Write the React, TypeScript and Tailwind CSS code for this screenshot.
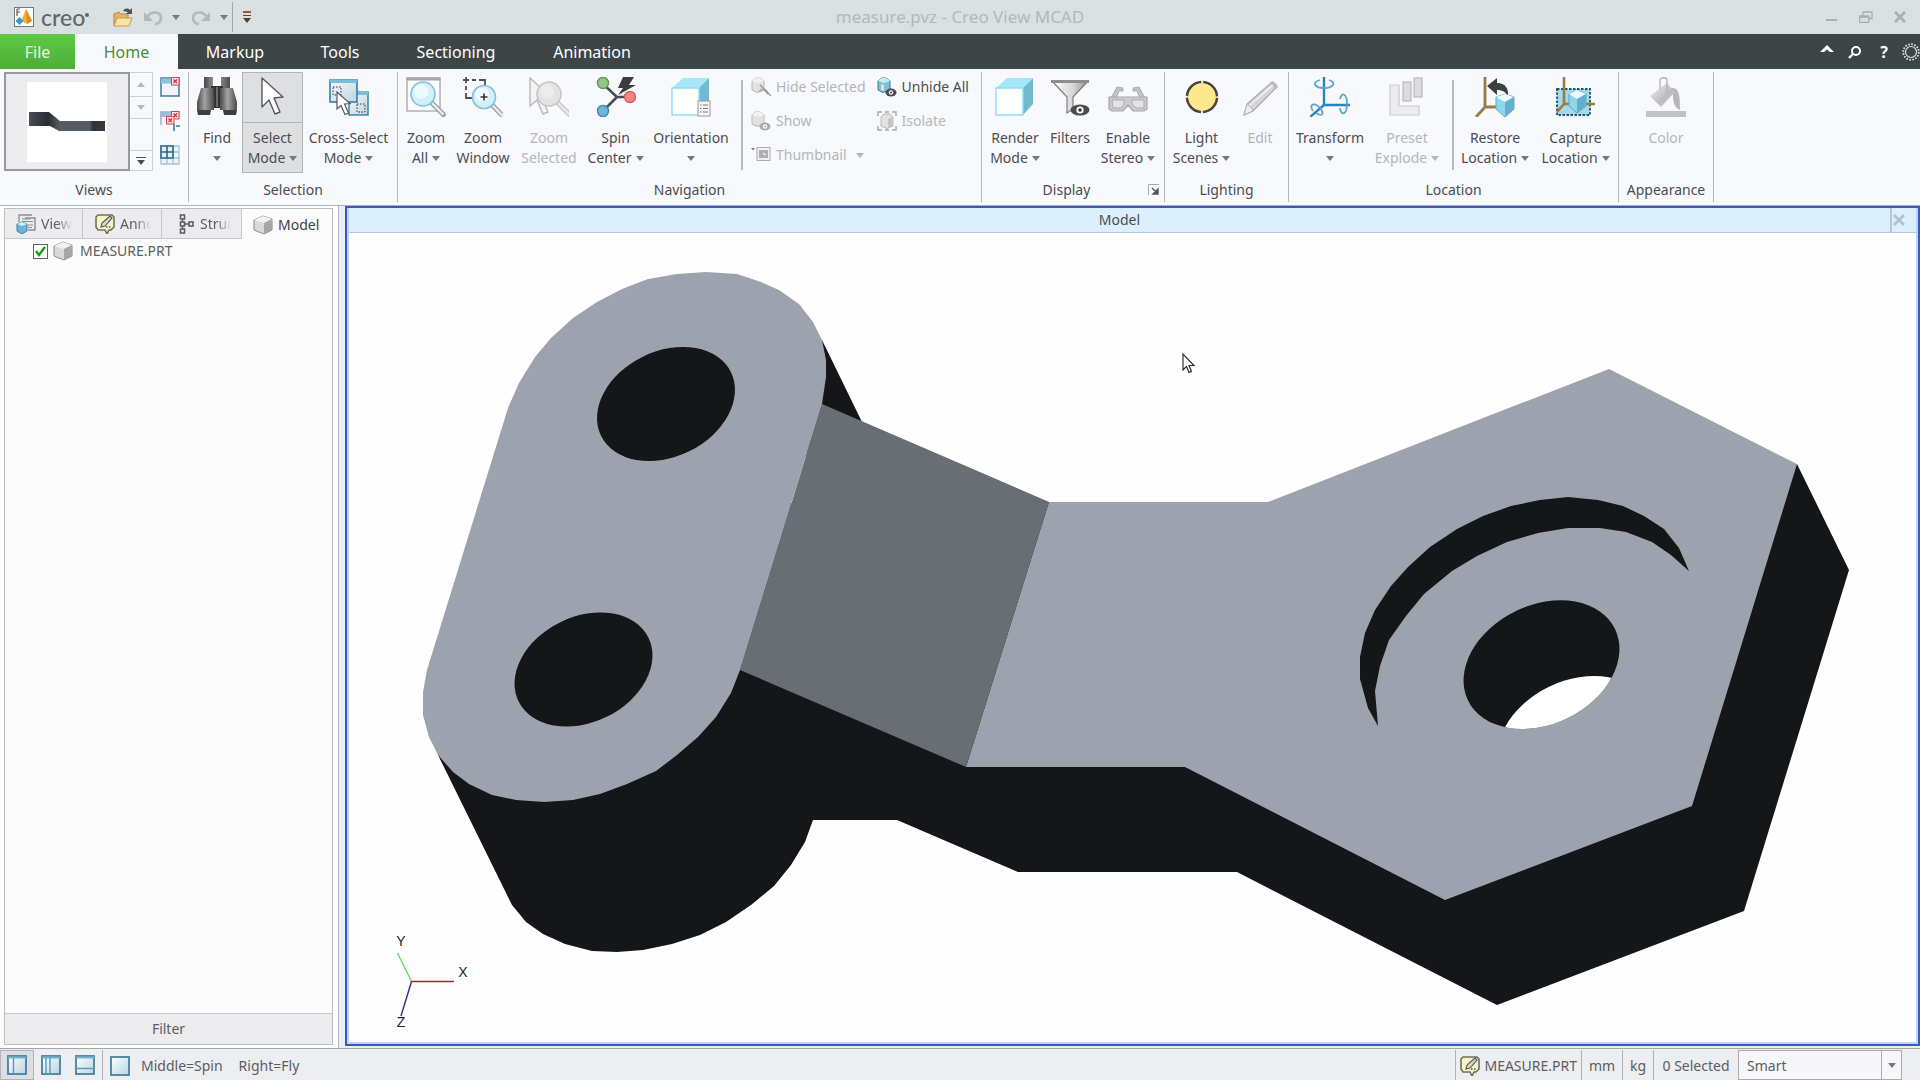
import { useState, type ReactNode } from "react";

/* ---------- small shared pieces ---------- */

const Caret = ({ className = "text-[#77787c]" }: { className?: string }) => (
  <svg viewBox="0 0 8 5" className={`h-[5px] w-2 shrink-0 ${className}`} aria-hidden="true">
    <path d="M0 0h8L4 5z" fill="currentColor" />
  </svg>
);

const Separator = () => <div className="mt-2 ml-1 h-[90px] w-0.5 shrink-0 bg-[#b9babd]" />;

/* ---------- large ribbon icons (40 x 40) ---------- */

const Big = ({ children }: { children: ReactNode }) => (
  <svg viewBox="0 0 40 40" className="h-10 w-10" aria-hidden="true">
    {children}
  </svg>
);

const FindIcon = () => (
  <Big>
    <defs>
      <linearGradient id="bin" x1="0" x2="1">
        <stop offset="0" stopColor="#4a4a4a" />
        <stop offset="0.45" stopColor="#a2a2a2" />
        <stop offset="1" stopColor="#4c4c4c" />
      </linearGradient>
    </defs>
    <path d="M7 0h9v11H7zM24 0h9v11h-9z" fill="url(#bin)" />
    <path d="M14 9h12v22H14z" fill="#333" />
    <path d="M4 11h12l1 2v20H0V25z" fill="url(#bin)" />
    <path d="M24 11h12l4 14v8H23V13z" fill="url(#bin)" />
    <path d="M0 33h14l-1 5H1zM26 33h14l-1 5H27z" fill="#3d3d3d" />
    <path d="M19 10h2v20h-2z" fill="#6c6c6c" />
  </Big>
);

const SelectIcon = () => (
  <Big>
    <path d="M9 1v29l7-7 6 14 5-2-6-14 9-1z" fill="#fff" stroke="#55585c" strokeWidth="1.4" strokeLinejoin="round" />
  </Big>
);

const CrossSelectIcon = () => (
  <Big>
    <defs>
      <linearGradient id="win" x1="0" y1="0" x2="1" y2="1">
        <stop offset="0" stopColor="#f6fafc" />
        <stop offset="1" stopColor="#bfd3e0" />
      </linearGradient>
    </defs>
    <rect x="20" y="15" width="19" height="23" fill="url(#win)" stroke="#2d7fa6" strokeWidth="1.4" />
    <path d="M20 14h19v4H20z" fill="#7dbdd8" />
    <rect x="28" y="27" width="8" height="8" fill="none" stroke="#333" strokeDasharray="1.500 1.500" />
    <rect x="1" y="3" width="27" height="22" fill="url(#win)" stroke="#2d7fa6" strokeWidth="1.6" />
    <path d="M1 2.500h27V6H1z" fill="#7dbdd8" />
    <rect x="4" y="10" width="8" height="8" fill="none" stroke="#333" strokeDasharray="1.500 1.500" />
    <path d="M8 15v17l4-3.500 4 9 3.500-1.500-4-9 5.500-.5z" fill="#fff" stroke="#55585c" strokeWidth="1.200" />
  </Big>
);

const Lens = ({ x, y, r, gray = false }: { x: number; y: number; r: number; gray?: boolean }) => (
  <>
    <path d={`M${x + r * 0.7} ${y + r * 0.7}L${x + r * 1.7} ${y + r * 1.7}`} stroke={gray ? "#c4c4c6" : "#9b9b9d"} strokeWidth="5" strokeLinecap="round" />
    <path d={`M${x + r * 0.8} ${y + r * 0.8}L${x + r * 1.65} ${y + r * 1.65}`} stroke="#e9e9ea" strokeWidth="2.6" strokeLinecap="round" />
    <circle cx={x} cy={y} r={r} fill={gray ? "#e3e3e4" : "#d3f0fa"} stroke={gray ? "#c6c6c8" : "#7fc0d8"} strokeWidth="1.6" />
    <circle cx={x - r * 0.15} cy={y - r * 0.2} r={r * 0.6} fill={gray ? "#ececed" : "#edfaff"} />
  </>
);

const ZoomAllIcon = () => (
  <Big>
    <rect x="1" y="1" width="33" height="33" fill="#fdfdfe" stroke="#a9abaf" strokeWidth="1.4" />
    <path d="M.5.5h34v3H.5z" fill="#a5a6aa" />
    <Lens x={17} y={17} r={12} />
  </Big>
);

const ZoomWindowIcon = () => (
  <Big>
    <path d="M0 3h6M3 0v6M9 3h4M16 3h6v5M3 9v4M3 16v5h6" fill="none" stroke="#4d4f53" strokeWidth="1.8" />
    <Lens x={21} y={20} r={11.500} />
    <path d="M17.500 20h7M21 16.500v7" stroke="#333" strokeWidth="1.600" />
  </Big>
);

const ZoomSelectedIcon = () => (
  <Big>
    <path d="M1 1v28l7-6 6 14 5-2-6-14 9-1z" fill="#f3f3f5" stroke="#b9babd" strokeWidth="1.400" />
    <Lens x={20} y={17} r={12} gray />
  </Big>
);

const SpinCenterIcon = () => (
  <Big>
    <path d="M6 6l15 14L7 34M21 20h12" fill="none" stroke="#4b4c4f" strokeWidth="2.600" />
    <path d="M27 0h11l-5 8h7L22 18l5-7h-5z" fill="#3b3c3e" />
    <circle cx="7" cy="6" r="5.500" fill="#93c786" stroke="#5f9655" strokeWidth="1.400" />
    <circle cx="34" cy="20" r="5.500" fill="#f1887f" stroke="#d0605a" strokeWidth="1.400" />
    <circle cx="7" cy="34" r="5.500" fill="#71b5dc" stroke="#3f86ae" strokeWidth="1.400" />
  </Big>
);

const CubeShape = () => (
  <>
    <path d="M1 11L12 1h26L28 11z" fill="#a5e6fa" />
    <path d="M28 11L38 1v26L28 38z" fill="#72b8d0" />
    <path d="M1 11h27v27H1z" fill="#fff" stroke="#8fdcf5" strokeWidth="1.400" />
  </>
);

const OrientationIcon = () => (
  <Big>
    <CubeShape />
    <rect x="27" y="24" width="12" height="15" fill="#f4f4f4" stroke="#9a9a9a" />
    <path d="M29 28h1.500M32 28h5M29 31.500h1.500M32 31.500h5M29 35h1.500M32 35h5" stroke="#777" strokeWidth="1.200" />
  </Big>
);

const RenderIcon = () => (
  <Big>
    <CubeShape />
  </Big>
);

const FiltersIcon = () => (
  <Big>
    <defs>
      <linearGradient id="fun" x1="0" x2="1">
        <stop offset="0" stopColor="#fff" />
        <stop offset="0.6" stopColor="#d5d5d5" />
        <stop offset="1" stopColor="#8e8e8e" />
      </linearGradient>
    </defs>
    <path d="M2 4h36L23 20v12l-6 4V20z" fill="url(#fun)" stroke="#7d7d7f" strokeWidth="1.200" />
    <path d="M1 3h38v3H1z" fill="#8d8d8f" />
    <ellipse cx="30" cy="33" rx="9.500" ry="5.500" fill="#4b4c4e" />
    <circle cx="30" cy="33" r="3.600" fill="#fff" />
    <circle cx="30" cy="33" r="1.800" fill="#333" />
  </Big>
);

const StereoIcon = () => (
  <Big>
    <path d="M3 21l6-11 6 1v3h-4l-3 7M37 21l-6-11-6 1v3h4l3 7" fill="#c3c3c5" stroke="#adadaf" />
    <path d="M1 20h38v12l-3 2H25l-5-6-5 6H4l-3-2z" fill="#cbcbcd" stroke="#a7a7a9" strokeWidth="1.200" />
    <path d="M4 23h12v4l-3 4H5zM24 23h12v8h-8l-4-4z" fill="#e4e4e5" stroke="#ababad" />
  </Big>
);

const LightIcon = () => (
  <Big>
    <circle cx="20" cy="20" r="15" fill="#fbe486" stroke="#4a4640" strokeWidth="2.600" strokeDasharray="21.500 2" strokeDashoffset="-1" />
    <circle cx="20" cy="20" r="13.500" fill="#fde88d" />
  </Big>
);

const EditIcon = () => (
  <Big>
    <path d="M4 38l3-11L32 5l5 5-24 24z" fill="#d4d4d6" stroke="#a8a8aa" strokeWidth="1.200" />
    <path d="M30 6l3-2 5 5-2 3z" fill="#b9b9bb" />
    <path d="M9 29L33 8" stroke="#f1f1f2" strokeWidth="1.600" />
    <path d="M4 38l3-11 4 3 2 4z" fill="#ececed" stroke="#b0b0b2" />
  </Big>
);

const TransformIcon = () => (
  <Big>
    <path d="M14 0v28h26M14 28L0 40" fill="none" stroke="#2b83b8" strokeWidth="2.400" />
    <path d="M10 3c-10 3-4 8 4 8s14-5 5-8" fill="none" stroke="#5fa5cb" strokeWidth="1.800" />
    <path d="M30 22c2-8 7-5 7 5s-6 13-7 4" fill="none" stroke="#5fa5cb" strokeWidth="1.800" />
    <path d="M3 34c-5-7 2-9 7-3s2 9-4 5" fill="none" stroke="#5fa5cb" strokeWidth="1.800" />
  </Big>
);

const PresetIcon = () => (
  <Big>
    <path d="M3 8h9v21h20v9H3z" fill="#ececee" stroke="#c9c9cb" strokeWidth="1.200" />
    <rect x="16" y="5" width="8" height="19" fill="#dcdcde" stroke="#bababc" strokeWidth="1.200" />
    <rect x="27" y="1" width="8" height="19" fill="#dcdcde" stroke="#bababc" strokeWidth="1.200" />
  </Big>
);

const RestoreIcon = () => (
  <Big>
    <path d="M10 0v30h12M10 30L1 40" fill="none" stroke="#9a7a45" strokeWidth="2.800" />
    <path d="M12 9L22 1v5c8 0 12 5 11 14-2-5-5-7-11-7v5z" fill="#3d3e40" />
    <path d="M21 20l9-3 9 3v12l-9 8-9-8z" fill="#8fd6ec" stroke="#5aa9c5" />
    <path d="M21 20l9-3 9 3-9 5z" fill="#e9fbff" />
    <path d="M30 25l9-5v12l-9 8z" fill="#62b1cc" />
  </Big>
);

const CaptureIcon = () => (
  <Big>
    <rect x="1" y="12" width="33" height="26" fill="#a4d9ec" stroke="#1f5470" strokeWidth="1.800" strokeDasharray="2.500 1.500" />
    <path d="M8 0v27h31M8 27l-7 8" fill="none" stroke="#9a7a45" strokeWidth="2.600" />
    <path d="M13 17l8-4 9 4v12l-9 7-8-7z" fill="#8fd6ec" stroke="#5aa9c5" />
    <path d="M13 17l8-4 9 4-9 5z" fill="#e9fbff" />
    <path d="M21 22l9-5v12l-9 7z" fill="#62b1cc" />
  </Big>
);

const ColorIcon = () => (
  <Big>
    <defs>
      <linearGradient id="pail" x1="0" y1="0" x2="1" y2="1">
        <stop offset="0" stopColor="#f0f0f0" />
        <stop offset="0.6" stopColor="#bdbdbf" />
        <stop offset="1" stopColor="#d6d6d8" />
      </linearGradient>
    </defs>
    <path d="M25 11c8-1 9 6 9 22-6-3-7-8-7-15z" fill="#b7b7b9" />
    <path d="M4 19L21 6l8 9-14 15z" fill="url(#pail)" />
    <path d="M14 12V3c0-3 7-3 7 0v12" fill="none" stroke="#b5b5b7" strokeWidth="1.400" />
    <path d="M0 34h40v6H0z" fill="#c2c2c4" />
  </Big>
);

/* ---------- small icons (20 x 20) ---------- */

const Small = ({ children, className = "" }: { children: ReactNode; className?: string }) => (
  <svg viewBox="0 0 20 20" className={`h-5 w-5 shrink-0 ${className}`} aria-hidden="true">
    {children}
  </svg>
);

const Cylinder = ({ tone }: { tone: "gray" | "blue" }) => (
  <>
    <path d="M1 4v9l5 2.500 7-2.500V4L9 1H4z" fill={tone === "gray" ? "#e2e2e3" : "#7fbfe0"} stroke={tone === "gray" ? "#b9b9bb" : "#3f7d9c"} />
    <path d="M1 4l3-3h5l4 3-6 2z" fill={tone === "gray" ? "#f2f2f3" : "#c5e9f6"} />
    {tone === "blue" && <path d="M4 7l3 1v6l-3-1z" fill="#f6e58a" />}
  </>
);

const Eye = ({ color }: { color: string }) => (
  <>
    <ellipse cx="14" cy="15.500" rx="5.500" ry="4" fill={color} />
    <circle cx="14" cy="15.500" r="2.200" fill="#fff" />
    <circle cx="14" cy="15.500" r="1.100" fill={color} />
  </>
);

const HideIcon = () => (
  <Small>
    <Cylinder tone="gray" />
    <path d="M8 15c3-4 7-3 9 2" fill="none" stroke="#b5b5b7" strokeWidth="2.500" />
    <path d="M9 8l11 11" stroke="#8f8f92" strokeWidth="1.200" />
  </Small>
);
const ShowIcon = () => (
  <Small>
    <Cylinder tone="gray" />
    <Eye color="#a9a9ab" />
  </Small>
);
const UnhideIcon = () => (
  <Small>
    <Cylinder tone="blue" />
    <Eye color="#4b4c4e" />
  </Small>
);
const IsolateIcon = () => (
  <Small>
    <path d="M1 5V1h4M8 1h4M15 1h4v4M1 15v4h4M8 19h4M15 19h4v-4" fill="none" stroke="#a6a6a8" strokeWidth="1.400" />
    <path d="M4 6v9l6 2.500 6-2.500V6l-3-3H7z" fill="#e2e2e3" stroke="#b9b9bb" />
    <path d="M11 8l5-2v9l-5 2z" fill="#c4c4c6" />
  </Small>
);
const ThumbnailIcon = () => (
  <Small>
    <path d="M0 3h4L2 5.500z" fill="#777" />
    <rect x="6" y="2.500" width="13" height="13" fill="#f1f1f2" stroke="#aaaaac" />
    <path d="M8 5h9v8H8z" fill="#aeaeb0" />
    <path d="M11 9l2-2 1 2 2-1-2 3z" fill="#dfdfe0" />
  </Small>
);

const PartIcon = () => (
  <Small>
    <path d="M1 5l9-4 9 3v11l-8 4-10-4z" fill="#d9d9da" stroke="#8b8b8d" />
    <path d="M1 5l9-4 9 3-8 4z" fill="#f2f2f2" />
    <path d="M11 8l8-4v11l-8 4z" fill="#a7a7a9" />
  </Small>
);

const ViewsTabIcon = () => (
  <Small>
    <path d="M3 8V1h13M9 4h10v12H12" fill="none" stroke="#8b8d90" strokeWidth="1.400" />
    <path d="M6 5h8M6 7.500h11M12 11h5M12 13.500h4" stroke="#8b8d90" strokeWidth="1.200" />
    <path d="M1 10l5-2 5 2v7l-5 3-5-3z" fill="#6db5d6" stroke="#3d84a6" />
    <path d="M1 10l5-2 5 2-5 2z" fill="#d0f0fb" />
  </Small>
);

const NoteIcon = () => (
  <Small>
    <path d="M3 1h14l2 2v10l-3 3h-2l-2 4-2-4H3l-2-3V3z" fill="#f6f4c0" stroke="#6e7062" strokeWidth="1.600" />
    <path d="M6 13l1-4 8-7 2 2-7 8z" fill="#d9d9d9" stroke="#555" strokeWidth="1.100" />
    <path d="M11 13h1.500M14 13h1.500" stroke="#555" strokeWidth="1.500" />
  </Small>
);

const StructureIcon = () => (
  <Small>
    <path d="M4.500 5v3M4.500 12v3M7 10h4" stroke="#55585c" strokeWidth="1.400" />
    <path d="M2.500 1h4v4h-4zM2.500 8h4v4h-4zM2.500 15h4v4h-4zM11 8h4v4h-4z" fill="none" stroke="#55585c" strokeWidth="1.500" />
  </Small>
);

const PaneIcon = ({ lines }: { lines?: string }) => (
  <svg viewBox="0 0 20 20" className="h-5 w-5 shrink-0" aria-hidden="true">
    <defs>
      <linearGradient id="pane" x1="0" y1="0" x2="1" y2="1">
        <stop offset="0" stopColor="#fdfeff" />
        <stop offset="1" stopColor="#b9d5e4" />
      </linearGradient>
    </defs>
    <rect x="1" y="1" width="18" height="18" fill="url(#pane)" stroke="#47809b" strokeWidth="1.800" />
    {lines && <path d="M1 1.500h18v2H1z" fill="#75b2cb" />}
    {lines && <path d={lines} stroke="#5d98b2" strokeWidth="1.400" />}
  </svg>
);

const RedX = ({ x, y }: { x: number; y: number }) => (
  <g transform={`translate(${x} ${y})`}>
    <rect x=".5" y=".5" width="7.500" height="7.500" fill="#fbe3e3" stroke="#d2474c" />
    <path d="M2.500 2.500l3.500 3.500M6 2.500L2.500 6" stroke="#c9353b" strokeWidth="1.300" />
  </g>
);

/* ---------- ribbon structure ---------- */

type BigButtonProps = {
  icon: ReactNode;
  lines: string[];
  caret?: boolean;
  disabled?: boolean;
  active?: boolean;
  width: string;
};

function BigButton({ icon, lines, caret, disabled, active, width }: BigButtonProps) {
  const own = lines.length === 1 && caret;
  return (
    <button
      type="button"
      disabled={disabled}
      aria-pressed={active}
      className={`flex h-[101px] shrink-0 flex-col border ${width} ${
        active ? "border-[#b3b4b7] bg-[#dedfe1]" : "border-transparent"
      } ${disabled ? "text-[#b4b5b9]" : "text-[#4b4c50]"}`}
    >
      <span className={`flex h-[50px] w-full shrink-0 justify-center border-b pt-1 ${active ? "border-[#b3b4b7]" : "border-transparent"}`}>
        {icon}
      </span>
      <span className="flex w-full flex-col items-center pt-[5px] leading-5">
        {lines.map((line, i) => (
          <span key={line} className="flex items-center gap-1 whitespace-nowrap">
            {line}
            {caret && !own && i === lines.length - 1 && <Caret className={disabled ? "text-[#b4b5b9]" : "text-[#77787c]"} />}
          </span>
        ))}
        {own && (
          <span className="flex h-5 items-center">
            <Caret />
          </span>
        )}
      </span>
    </button>
  );
}

function Group({ title, children, launcher, className = "" }: { title: string; children: ReactNode; launcher?: boolean; className?: string }) {
  return (
    <section
      aria-label={title}
      className={`my-[3px] flex shrink-0 flex-col border-r border-[#b4b6ba] ${className}`}
    >
      <div className="flex h-[101px] items-start">{children}</div>
      <div className="flex h-7 items-center pt-1.5 text-[#4b4c50]">
        <h2 className="flex-1 text-center">{title}</h2>
        {launcher && (
          <button type="button" aria-label={`${title} options`} className="mr-px flex h-3 w-3 items-center justify-center">
            <svg viewBox="0 0 12 12" className="h-3 w-3">
              <path d="M.5 11V.5H11" fill="none" stroke="#a9abae" />
              <path d="M4 4l5 5M10 5v5H5z" fill="#55565a" stroke="#55565a" strokeWidth="1.400" />
            </svg>
          </button>
        )}
      </div>
    </section>
  );
}

function SmallButton({ icon, label, disabled, caret }: { icon: ReactNode; label: string; disabled?: boolean; caret?: boolean }) {
  return (
    <button
      type="button"
      disabled={disabled}
      className={`flex items-center gap-[5px] whitespace-nowrap leading-5 ${disabled ? "text-[#b4b5b9]" : "text-[#4b4c50]"}`}
    >
      {icon}
      {label}
      {caret && <span className="pl-1"><Caret className="text-[#b4b5b9]" /></span>}
    </button>
  );
}

function ViewsGallery() {
  return (
    <div className="flex pl-1">
      <button type="button" aria-label="View thumbnail" className="flex h-[99px] w-[126px] items-center justify-center border-2 border-[#98999d] bg-[#ececee]">
        <svg viewBox="0 0 80 80" className="h-20 w-20" aria-hidden="true">
          <defs>
            <linearGradient id="thumbBar" x1="0" x2="1">
              <stop offset="0" stopColor="#4a4e54" />
              <stop offset="0.25" stopColor="#2a2d31" />
              <stop offset="0.4" stopColor="#565b63" />
              <stop offset="0.8" stopColor="#565b63" />
              <stop offset="0.84" stopColor="#2f343a" />
              <stop offset="1" stopColor="#353a40" />
            </linearGradient>
          </defs>
          <path d="M0 0h80v80H0z" fill="#fff" />
          <path d="M2 30h20l11 9h45v10H32l-9-5H2z" fill="url(#thumbBar)" />
        </svg>
      </button>
      <div className="flex h-[99px] w-[23px] flex-col border border-l-0 border-[#cfd0d3] text-[#b4b5b9]">
        <button type="button" aria-label="Previous views" className="flex h-6 rotate-180 items-center justify-center border-t border-[#cfd0d3]">
          <Caret className="text-[#b9babd]" />
        </button>
        <button type="button" aria-label="Next views" className="flex h-[22px] items-center justify-center border-b border-[#cfd0d3]">
          <Caret className="text-[#b9babd]" />
        </button>
        <div className="flex-1" />
        <button type="button" aria-label="More views" className="flex h-5 flex-col items-center justify-center gap-0.5 border-t border-[#cfd0d3]">
          <span className="h-px w-2.5 bg-[#4b4c50]" />
          <Caret className="text-[#4b4c50]" />
        </button>
      </div>
      <div className="flex flex-col gap-3.5 pt-[5px] pl-[7px]">
        <button type="button" aria-label="Close view">
          <Small>
            <rect x="1" y="1" width="18" height="18" fill="#eef4f8" stroke="#4b83a0" strokeWidth="1.600" />
            <path d="M1 1.500h18v5H1z" fill="#8fc3d8" />
            <RedX x={11} y={0} />
          </Small>
        </button>
        <button type="button" aria-label="Close all views">
          <Small>
            <path d="M1 14V1h18v5" fill="#eef4f8" stroke="#8fb2c4" strokeWidth="1.400" />
            <path d="M0 1h14v5H0z" fill="#8fc3d8" />
            <path d="M14 13v7M16 15h4" stroke="#2d7fa6" strokeWidth="1.600" />
            <RedX x={11} y={0} />
            <RedX x={6} y={5} />
          </Small>
        </button>
        <button type="button" aria-label="View layout">
          <Small>
            <path d="M1 1h18v18H1zM1 13h18M13 1v18M7 13v6M13 7h6" fill="#eef4f8" stroke="#9fc4d4" strokeWidth="1.300" />
            <path d="M1 1h12v12H1zM7 1v12M1 7h12" fill="#e2f0f7" stroke="#2c6788" strokeWidth="1.600" />
          </Small>
        </button>
      </div>
    </div>
  );
}

function Ribbon() {
  return (
    <div className="flex h-[137px] shrink-0 border-b border-[#a9b3bd] bg-[#f8f9fc]">
      <Group title="Views" className="w-[189px]">
        <ViewsGallery />
      </Group>
      <Group title="Selection" className="px-[3px]">
        <BigButton icon={<FindIcon />} lines={["Find"]} caret width="w-[50px]" />
        <BigButton icon={<SelectIcon />} lines={["Select", "Mode"]} caret active width="w-[61px]" />
        <BigButton icon={<CrossSelectIcon />} lines={["Cross-Select", "Mode"]} caret width="w-[91px]" />
      </Group>
      <Group title="Navigation" className="w-[584px]">
        <BigButton icon={<ZoomAllIcon />} lines={["Zoom", "All"]} caret width="w-[56px]" />
        <BigButton icon={<ZoomWindowIcon />} lines={["Zoom", "Window"]} width="w-[58px]" />
        <BigButton icon={<ZoomSelectedIcon />} lines={["Zoom", "Selected"]} disabled width="w-[74px]" />
        <BigButton icon={<SpinCenterIcon />} lines={["Spin", "Center"]} caret width="w-[59px]" />
        <BigButton icon={<OrientationIcon />} lines={["Orientation"]} caret width="w-[92px]" />
        <Separator />
        <div className="flex gap-[11px] pt-[5px] pl-2">
          <div className="flex flex-col items-start gap-[14px]">
            <SmallButton icon={<HideIcon />} label="Hide Selected" disabled />
            <SmallButton icon={<ShowIcon />} label="Show" disabled />
            <SmallButton icon={<ThumbnailIcon />} label="Thumbnail" disabled caret />
          </div>
          <div className="flex flex-col items-start gap-[14px]">
            <SmallButton icon={<UnhideIcon />} label="Unhide All" />
            <SmallButton icon={<IsolateIcon />} label="Isolate" disabled />
          </div>
        </div>
      </Group>
      <Group title="Display" launcher className="px-[3px]">
        <BigButton icon={<RenderIcon />} lines={["Render", "Mode"]} caret width="w-[60px]" />
        <BigButton icon={<FiltersIcon />} lines={["Filters"]} width="w-[50px]" />
        <BigButton icon={<StereoIcon />} lines={["Enable", "Stereo"]} caret width="w-[66px]" />
      </Group>
      <Group title="Lighting" className="px-[3px]">
        <BigButton icon={<LightIcon />} lines={["Light", "Scenes"]} caret width="w-[67px]" />
        <BigButton icon={<EditIcon />} lines={["Edit"]} disabled width="w-[50px]" />
      </Group>
      <Group title="Location" className="px-[3px]">
        <BigButton icon={<TransformIcon />} lines={["Transform"]} caret width="w-[76px]" />
        <BigButton icon={<PresetIcon />} lines={["Preset", "Explode"]} caret disabled width="w-[78px]" />
        <div className="w-0.5" />
        <Separator />
        <BigButton icon={<RestoreIcon />} lines={["Restore", "Location"]} caret width="w-[82px]" />
        <BigButton icon={<CaptureIcon />} lines={["Capture", "Location"]} caret width="w-[79px]" />
      </Group>
      <Group title="Appearance" className="w-[95px] px-[3px]">
        <div className="flex w-full justify-center">
          <BigButton icon={<ColorIcon />} lines={["Color"]} disabled width="w-[56px]" />
        </div>
      </Group>
    </div>
  );
}

/* ---------- title bar and tab bar ---------- */

function TitleBar() {
  return (
    <header className="grid h-[34px] shrink-0 grid-cols-[1fr_auto_1fr] items-center bg-[#dae0df]">
      <div className="flex items-center">
        <svg viewBox="0 0 20 20" className="ml-3.5 h-5 w-5" aria-hidden="true">
          <rect x=".5" y=".5" width="19" height="19" fill="#fff" stroke="#76797c" />
          <path d="M3 2v7M3 2h3M3 5h3" stroke="#555" strokeWidth="1.200" />
          <path d="M12 2l6 12-5 3-6-3z" fill="#f4b12f" />
          <path d="M12 2l6 12-5 3z" fill="#d98c1f" />
          <path d="M5.500 10l4 4-4 4-4-4z" fill="#2e9bd6" />
        </svg>
        <span className="ml-[7px] flex items-start font-['Lato',sans-serif] text-[23px] leading-7 font-medium text-[#5f6769]">
          creo
          <span className="mt-2.5 h-1 w-1 rounded-full bg-[#5f6769]" />
        </span>
        <button type="button" aria-label="Open" className="ml-6">
          <Small>
            <path d="M1 7l5-2 1 2h8v11H1z" fill="#e3b565" stroke="#b98a3e" />
            <path d="M4 11h15l-3 8H1z" fill="#fbe3a8" stroke="#c69a52" />
            <path d="M10 4c2-3 5-3 7-1l2-2v6h-6l2-2" fill="#4d5558" />
          </Small>
        </button>
        <button type="button" aria-label="Undo" className="ml-2.5 flex items-center gap-[9px]">
          <Small>
            <path d="M5 9c3-5 13-5 13 2 0 4-3 6-6 6" fill="none" stroke="#b3b8b9" strokeWidth="2.600" />
            <path d="M1 5v9h9z" fill="#b3b8b9" />
          </Small>
          <Caret />
        </button>
        <button type="button" aria-label="Redo" className="ml-[11px] flex items-center gap-[9px]">
          <Small>
            <path d="M15 9C12 4 2 4 2 11c0 4 3 6 6 6" fill="none" stroke="#b3b8b9" strokeWidth="2.600" />
            <path d="M19 5v9h-9z" fill="#b3b8b9" />
          </Small>
          <Caret />
        </button>
        <span className="ml-1 h-[30px] w-px bg-[#a3a8a9]" />
        <button type="button" aria-label="Customize toolbar" className="ml-2.5 flex flex-col items-center gap-0.5">
          <span className="h-0.5 w-2 bg-[#9a5a2e]" />
          <span className="h-px w-2 bg-[#6b4026]" />
          <Caret className="text-[#5c3a26]" />
        </button>
      </div>
      <h1 className="text-[17px] leading-6 text-[#b3b8b8]">measure.pvz - Creo View MCAD</h1>
      <div className="flex items-center justify-end gap-[21px] pr-3.5 text-[#a9afb0]">
        <button type="button" aria-label="Minimize">
          <svg viewBox="0 0 12 12" className="h-3 w-3"><path d="M0 8h11v2H0z" fill="currentColor" /></svg>
        </button>
        <button type="button" aria-label="Restore window">
          <svg viewBox="0 0 14 12" className="h-3 w-3.5">
            <path d="M.7 5h9v6.300h-9zM.7 6h9M4 4.500V1h9v6.500h-3" fill="none" stroke="currentColor" strokeWidth="1.300" />
          </svg>
        </button>
        <button type="button" aria-label="Close window">
          <svg viewBox="0 0 12 12" className="h-3 w-3"><path d="M1 1l10 10M11 1L1 11" stroke="currentColor" strokeWidth="2.600" /></svg>
        </button>
      </div>
    </header>
  );
}

function TabBar() {
  const tab = "h-full text-white";
  return (
    <nav className="flex h-[35px] shrink-0 items-center bg-[#3d4547] text-base">
      <button type="button" className="h-full w-[75px] bg-linear-to-b from-[#5fcb46] to-[#4cae37] text-[#e4f6dc]">File</button>
      <button type="button" aria-current="page" className="h-full w-[103px] bg-[#f8f9fc] text-[#4b8d35]">Home</button>
      <button type="button" className={`${tab} w-[114px]`}>Markup</button>
      <button type="button" className={`${tab} w-[96px]`}>Tools</button>
      <button type="button" className={`${tab} w-[136px]`}>Sectioning</button>
      <button type="button" className={`${tab} w-[136px]`}>Animation</button>
      <div className="ml-auto flex h-full items-center gap-3.5 text-white">
        <button type="button" aria-label="Minimize ribbon">
          <svg viewBox="0 0 14 14" className="h-3.5 w-3.5"><path d="M0 7l7-7 7 7h-4L7 4.500 4 7z" fill="currentColor" /></svg>
        </button>
        <button type="button" aria-label="Search">
          <svg viewBox="0 0 14 14" className="h-3.5 w-3.5"><circle cx="8" cy="6" r="4" fill="none" stroke="currentColor" strokeWidth="2" /><path d="M5 9l-4 4" stroke="currentColor" strokeWidth="2.400" /></svg>
        </button>
        <button type="button" aria-label="Help" className="w-4 font-bold">?</button>
        <button type="button" aria-label="Learning connector" className="-ml-1">
          <svg viewBox="0 0 18 18" className="h-[18px] w-[18px]">
            <circle cx="9" cy="9" r="5.500" fill="none" stroke="#dfe3e4" strokeWidth="1.200" />
            <circle cx="9" cy="9" r="7.800" fill="none" stroke="#dfe3e4" strokeWidth="1.800" strokeDasharray="1.600 1.463" />
          </svg>
        </button>
      </div>
    </nav>
  );
}

/* ---------- side panel ---------- */

const fade = "w-[31px] overflow-hidden whitespace-nowrap text-left mask-r-from-50%";

function SidePanel() {
  const [shown, setShown] = useState(true);
  const tab = "flex h-full items-center border-r border-b border-[#c6c7ca] bg-[#ececee] pt-px text-[#5c5d60]";
  return (
    <aside className="flex w-[339px] shrink-0 flex-col border-r border-[#b4b6ba] bg-white pt-0.5 pr-[5px] pb-[3px] pl-1">
      <div className="flex min-h-0 flex-1 flex-col border border-[#bcbdc0] bg-[#fbfbfc]">
        <div role="tablist" className="flex h-[30px] shrink-0">
          <button type="button" role="tab" className={`${tab} w-[78px] gap-[5px] pl-[11px]`}>
            <ViewsTabIcon />
            <span className={fade}>Views</span>
          </button>
          <button type="button" role="tab" className={`${tab} w-[79px] gap-[5px] pl-3`}>
            <NoteIcon />
            <span className={fade}>Annotations</span>
          </button>
          <button type="button" role="tab" className={`${tab} w-20 gap-0.5 pl-4`}>
            <StructureIcon />
            <span className={fade}>Structure</span>
          </button>
          <button type="button" role="tab" aria-selected="true" className="flex h-full flex-1 items-center gap-[5px] pt-px pl-[11px] text-[#3f4043]">
            <PartIcon />
            Model
          </button>
        </div>
        <label className="flex h-6 items-center gap-[5px] pl-7 text-[#5c5d60]">
          <span className="grid">
            <input
              type="checkbox"
              checked={shown}
              onChange={() => setShown(!shown)}
              className="peer col-start-1 row-start-1 h-[15px] w-[15px] appearance-none border border-[#5f6163] bg-white"
            />
            <svg viewBox="0 0 15 15" className="pointer-events-none invisible col-start-1 row-start-1 h-[15px] w-[15px] peer-checked:visible" aria-hidden="true">
              <path d="M3 7l3 4 6-8" fill="none" stroke="#1a9a1e" strokeWidth="2.400" />
            </svg>
          </span>
          <PartIcon />
          <span className="pl-0.5">MEASURE.PRT</span>
        </label>
        <div className="flex-1" />
        <button type="button" className="h-[31px] border-t border-[#c6c7ca] bg-[#ececee] text-[#5c5d60]">Filter</button>
      </div>
    </aside>
  );
}

/* ---------- 3D viewport ---------- */

const TOP = "#9ca3af";
const SIDE = "#141618";

function Scene() {
  return (
    <svg viewBox="349 233 1567 809" className="h-full w-full" role="img" aria-label="Shaded model of the measure part">
      <defs>
        <clipPath id="bore">
          <ellipse cx="1541.500" cy="664.700" rx="81.700" ry="59.500" transform="rotate(-25.9 1541.500 664.700)" />
        </clipPath>
      </defs>
      <path
        fill={SIDE}
        d="M822 340L862 422 1048 502 1268 650 1797 464 1849 570 1744 911 1497 1005 1237 872H1018L897 820H813L805 842 791 865 774 886 751 905 726 922 700 935 672 944 643 950 617 952 592 951 565 944 543 934 526 922 512 905 438 755 540 600 800 500z"
      />
      <path
        fill={TOP}
        d="M1049 502H1268L1609 369 1797 464 1692 806 1445 900 1185 767H966z"
      />
      <path fill="#696d74" d="M822 404L1049 502 966 767 740 670z" />
      <path
        fill={TOP}
        d="M706 272L737 274 761 282 779 290 799 304 813 322 822 340 826 360 826 377 822 404 740 670 731 693 716 717 698 737 677 755 656 771 627 784 600 794 573 800 544 802 516 800 492 795 469 784 453 772 438 755 429 737 423 715 423 692 427 670 508 408 519 383 535 357 551 338 573 318 597 302 622 289 648 279 677 274z"
      />
      <g fill={SIDE}>
        <ellipse cx="666" cy="404" rx="72.300" ry="52.700" transform="rotate(-26 666 404)" />
        <ellipse cx="583.500" cy="669.500" rx="72.300" ry="52.700" transform="rotate(-26 583.500 669.500)" />
        <path d="M1378 726L1368 708 1360 679V657L1365 633 1375 610 1391 586 1408 567 1430 547 1457 529 1483 516 1511 506 1540 500 1568 497 1598 500 1623 506 1644 516 1664 529 1679 548 1689 571 1671 555 1652 542 1626 532 1600 528H1568L1538 533 1507 542 1477 556 1452 571 1424 594 1406 616 1389 640 1380 666 1375 691z" />
      </g>
      <g clipPath="url(#bore)">
        <path d="M1450 590h190v150h-190z" fill={SIDE} />
        <ellipse cx="1575" cy="740.300" rx="81.700" ry="59.500" fill="#fff" transform="rotate(-25.9 1575 740.300)" />
      </g>

      <g fill="none" strokeWidth="1.400">
        <path d="M411.500 981.500L397.500 953" stroke="#5fdc5f" />
        <path d="M411.500 981.500H454" stroke="#9a2a32" />
        <path d="M411.500 981.500L401 1016" stroke="#2a2a9a" />
      </g>
      <g fill="#222" fontSize="14" fontFamily="Liberation Sans, sans-serif" textAnchor="middle">
        <text x="401" y="946">Y</text>
        <text x="463" y="977">X</text>
        <text x="401" y="1027">Z</text>
      </g>

      <path d="M1183 354v16l3.500-3.500 2.500 6 2.500-1-2.500-6h5z" fill="#fff" stroke="#222" strokeWidth="1.100" />
    </svg>
  );
}

function Viewport() {
  return (
    <main className="flex min-w-0 flex-1 flex-col bg-[#e9f0fa] pb-0.5 pl-1.5">
      <div className="flex min-h-0 flex-1 flex-col border-2 border-[#4157bd]">
        <div className="flex min-h-0 flex-1 flex-col border-2 border-t-0 border-[#b9d9f2] bg-[#fefefe]">
          <div className="flex h-[25px] shrink-0 items-stretch border-b border-[#b4cbd8] bg-[#daf1fd]">
            <h2 className="min-w-0 flex-1 pt-0.5 text-center leading-5 text-[#4b4c50]">Model</h2>
            <button type="button" aria-label="Close Model view" className="flex w-[26px] items-center border-l-2 border-[#b7c8dc] pl-px text-[#b3bfcb]">
              <svg viewBox="0 0 12 12" className="h-3 w-3"><path d="M1 1l10 10M11 1L1 11" stroke="currentColor" strokeWidth="2.800" /></svg>
            </button>
          </div>
          <div className="min-h-0 flex-1">
            <Scene />
          </div>
        </div>
      </div>
    </main>
  );
}

/* ---------- status bar ---------- */

function StatusBar() {
  const cell = "flex h-full items-center border-l border-[#b0b2b6] pt-0.5";
  return (
    <footer className="flex h-8 shrink-0 items-center border-t border-[#a3a5ab] bg-[#edeef1] pt-px text-[#5c5d60]">
      <button type="button" aria-label="Single side panel" aria-pressed="true" className="flex h-full w-[34px] items-center justify-center border border-[#b0b2b6] bg-[#dcdee2]">
        <PaneIcon lines="M6.500 3v16" />
      </button>
      <button type="button" aria-label="Double side panel" className="ml-[7px]">
        <PaneIcon lines="M5 3v16M9 3v16" />
      </button>
      <button type="button" aria-label="Bottom panel" className="mr-[7px] ml-3.5">
        <PaneIcon lines="M1 13.500h18" />
      </button>
      <div className={`${cell} pl-[7px]`}>
        <PaneIcon />
        <span className="pl-[11px]">Middle=Spin</span>
        <span className="pl-4">Right=Fly</span>
      </div>
      <div className="ml-auto flex h-full">
        <div className={`${cell} gap-1 px-1`}>
          <NoteIcon />
          MEASURE.PRT
        </div>
        <div className={`${cell} w-[41px] justify-center`}>mm</div>
        <div className={`${cell} w-[31px] justify-center`}>kg</div>
        <div className={`${cell} w-[85px] justify-center`}>0 Selected</div>
        <div className="mr-[18px] grid h-full w-[164px] border border-[#a9abb0] bg-[#f7f7f9]">
          <select aria-label="Selection filter" className="col-start-1 row-start-1 w-full appearance-none bg-transparent pt-0.5 pl-2">
            <option>Smart</option>
          </select>
          <span className="pointer-events-none col-start-1 row-start-1 flex h-full w-5 items-center justify-center justify-self-end border-l border-[#a9abb0]">
            <Caret />
          </span>
        </div>
      </div>
    </footer>
  );
}

export default function App() {
  return (
    <div className="flex h-screen flex-col overflow-hidden bg-white font-['Noto_Sans',sans-serif] text-sm">
      <TitleBar />
      <TabBar />
      <Ribbon />
      <div className="flex min-h-0 flex-1">
        <SidePanel />
        <Viewport />
      </div>
      <StatusBar />
    </div>
  );
}
